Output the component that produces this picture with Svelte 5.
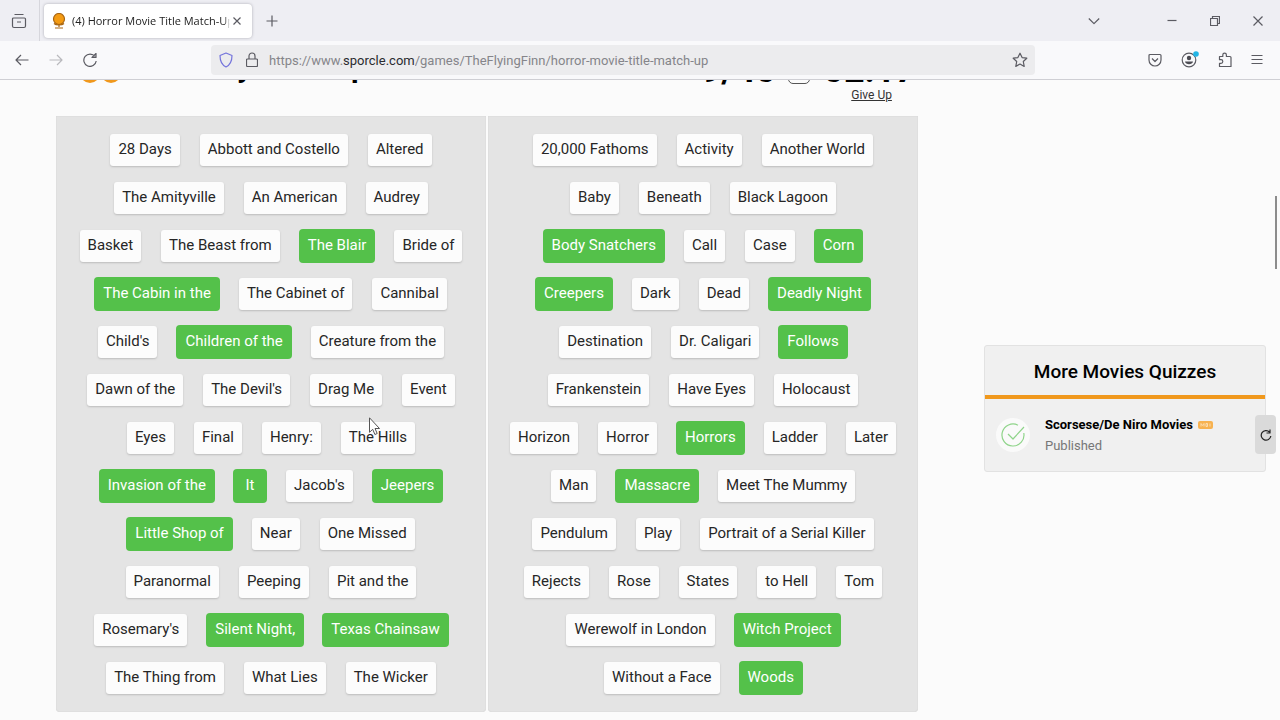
<script lang="ts">
	interface Answer {
		text: string;
		found?: boolean;
	}

	// a leading + marks an answer that is already matched
	function parse(list: string): Answer[] {
		return list.split('|').map((item) => ({
			text: item.replace('+', ''),
			found: item.startsWith('+')
		}));
	}

	const columns = [
		parse(
			"28 Days|Abbott and Costello|Altered|The Amityville|An American|Audrey|Basket|The Beast from|+The Blair|Bride of|+The Cabin in the|The Cabinet of|Cannibal|Child's|+Children of the|Creature from the|Dawn of the|The Devil's|Drag Me|Event|Eyes|Final|Henry:|The Hills|+Invasion of the|+It|Jacob's|+Jeepers|+Little Shop of|Near|One Missed|Paranormal|Peeping|Pit and the|Rosemary's|+Silent Night,|+Texas Chainsaw|The Thing from|What Lies|The Wicker"
		),
		parse(
			'20,000 Fathoms|Activity|Another World|Baby|Beneath|Black Lagoon|+Body Snatchers|Call|Case|+Corn|+Creepers|Dark|Dead|+Deadly Night|Destination|Dr. Caligari|+Follows|Frankenstein|Have Eyes|Holocaust|Horizon|Horror|+Horrors|Ladder|Later|Man|+Massacre|Meet The Mummy|Pendulum|Play|Portrait of a Serial Killer|Rejects|Rose|States|to Hell|Tom|Werewolf in London|+Witch Project|Without a Face|+Woods'
		)
	];

	let url = $state('/games/TheFlyingFinn/horror-movie-title-match-up');
</script>

<div class="browser">
	<div class="tabbar">
		<button class="icon view" aria-label="View">
			<svg width="16" height="16" viewBox="0 0 16 16">
				<path d="M3.5 1.5h9M2.5 5h11a1 1 0 0 1 1 1v7a1.5 1.5 0 0 1-1.500 1.500H3A1.500 1.500 0 0 1 1.500 13V6a1 1 0 0 1 1-1zM6 9h4" />
			</svg>
		</button>
		<div class="tab">
			<svg class="globe" width="14" height="16" viewBox="0 0 14 16">
				<path d="M3 15h8M7 11v3M2 10.500c2 2 8 2 10 0" />
				<circle cx="7" cy="6" r="5.500" />
			</svg>
			<span class="tab-title">(4) Horror Movie Title Match-Up</span>
			<button class="icon" aria-label="Close tab">
				<svg width="10" height="10" viewBox="0 0 10 10"><path d="M1.500 1.500l7 7M8.500 1.500l-7 7" /></svg>
			</button>
		</div>
		<button class="icon plus" aria-label="New tab">
			<svg width="12" height="12" viewBox="0 0 12 12"><path d="M6 .5v11M.5 6h11" /></svg>
		</button>
		<div class="window">
			<button class="icon" aria-label="List all tabs">
				<svg width="12" height="12" viewBox="0 0 12 12"><path d="M.8 3.500L6 8.700l5.200-5.200" /></svg>
			</button>
			<button class="icon" aria-label="Minimize">
				<svg width="10" height="10" viewBox="0 0 10 10"><path d="M.5 4.500h9" /></svg>
			</button>
			<button class="icon" aria-label="Restore">
				<svg width="10" height="10" viewBox="0 0 10 10"><path d="M.5 2.500h7v7h-7zM2.500 2.500v-2h7v7h-2" /></svg>
			</button>
			<button class="icon" aria-label="Close">
				<svg width="10" height="10" viewBox="0 0 10 10"><path d="M.5.5l9 9M9.500.5l-9 9" /></svg>
			</button>
		</div>
	</div>

	<div class="toolbar">
		<div class="nav">
			<button class="icon" aria-label="Back">
				<svg width="14" height="14" viewBox="0 0 14 14"><path d="M13.500 7H1M6 2L1 7l5 5" /></svg>
			</button>
			<button class="icon" aria-label="Forward" disabled>
				<svg width="14" height="14" viewBox="0 0 14 14"><path d="M.5 7H13M8 2l5 5-5 5" /></svg>
			</button>
			<button class="icon" aria-label="Reload">
				<svg width="14" height="14" viewBox="0 0 14 14">
					<path d="M12 3.500A6.200 6.200 0 1 0 13.200 8M13 .5v4H9z" />
				</svg>
			</button>
		</div>
		<label class="urlbar">
			<svg class="shield" width="14" height="16" viewBox="0 0 14 16">
				<path d="M7 1l6 2.500c0 5-1 9-6 11.500-5-2.500-6-6.500-6-11.500z" />
			</svg>
			<svg width="12" height="16" viewBox="0 0 12 16">
				<path d="M3 7V4a3 3 0 0 1 6 0v3M1.500 7h9a1 1 0 0 1 1 1v5.500a1 1 0 0 1-1 1h-9a1 1 0 0 1-1-1V8a1 1 0 0 1 1-1z" />
			</svg>
			<span class="host">https://www.<b>sporcle.com</b></span>
			<input aria-label="Address" bind:value={url} />
			<svg width="16" height="16" viewBox="0 0 16 16">
				<path d="M8 1.200l2.100 4.400 4.700.6-3.500 3.300.9 4.900L8 12l-4.200 2.400.9-4.900L1.200 6.200l4.700-.6z" />
			</svg>
		</label>
		<div class="tools">
			<button class="icon" aria-label="Save to Pocket">
				<svg width="14" height="14" viewBox="0 0 14 14">
					<path d="M2 1.500h10a1 1 0 0 1 1 1V7A6 6 0 0 1 1 7V2.500a1 1 0 0 1 1-1zM4 5.500l3 3 3-3" />
				</svg>
			</button>
			<button class="icon" aria-label="Account">
				<svg width="18" height="18" viewBox="0 0 18 18">
					<circle cx="8" cy="9" r="6.800" />
					<circle class="solid" cx="8" cy="7" r="2.200" />
					<path class="solid" d="M4 10.500h8c-.5 3.500-7.500 3.500-8 0z" />
					<circle class="dot" cx="15" cy="3" r="2.800" />
				</svg>
			</button>
			<button class="icon" aria-label="Extensions">
				<svg width="14" height="16" viewBox="0 0 14 16">
					<path d="M1.500 4.500h3.300V3a1.800 1.800 0 0 1 3.600 0v1.500h3.600a1 1 0 0 1 1 1v9H1.500v-3.200H3a1.800 1.800 0 0 0 0-3.600H1.500z" />
				</svg>
			</button>
			<button class="icon" aria-label="Menu">
				<svg width="12" height="12" viewBox="0 0 12 12"><path d="M.5 1.500h11M.5 5.500h11M.5 9.500h11" /></svg>
			</button>
		</div>
	</div>

	<main>
		<section class="game">
			<header>
				<div class="status">
					<svg width="40" height="20" viewBox="0 0 40 20">
						<circle cx="10" cy="9" r="10" />
						<circle cx="31" cy="9" r="10" />
					</svg>
					<span class="first">y</span>
					<span>p</span>
				</div>
				<div class="score">9/40</div>
				<div class="timer">
					<div class="clock"><span class="pause"></span>02:17</div>
					<a href="#give-up">Give Up</a>
				</div>
			</header>
			<div class="board">
				{#each columns as answers}
					<div class="column">
						{#each answers as answer}
							<button class="answer" class:found={answer.found}>{answer.text}</button>
						{/each}
					</div>
				{/each}
			</div>
		</section>

		<aside>
			<h2>More Movies Quizzes</h2>
			<div class="quiz">
				<svg class="check" width="34" height="34" viewBox="0 0 34 34">
					<circle class="disc" cx="17" cy="17" r="17" />
					<path d="M22 7.200A11 11 0 1 0 27.800 15M12 16l5 5L28 9" />
				</svg>
				<div>
					<a href="#quiz">
						Scorsese/De Niro Movies
						<svg class="badge" width="15" height="8" viewBox="0 0 15 8">
							<rect width="15" height="8" rx="2" />
							<path d="M3 5.500v-3l1.500 2 1.500-2v3M8 2.500h1.500v3H8zM12 2.500v3" />
						</svg>
					</a>
					<p>Published</p>
				</div>
			</div>
		</aside>
	</main>

	<button class="icon refresh" aria-label="Refresh">
		<svg width="12" height="12" viewBox="0 0 12 12"><path d="M9.500 3A4.800 4.800 0 1 0 10.800 7M10 .5V4H6.500" /></svg>
	</button>
	<div class="scroll"></div>
	<svg class="cursor" width="12" height="19" viewBox="0 0 12 19">
		<path d="M.5.8v14.500l3.200-3 2.200 5.200 2.300-1-2.200-5h4.500z" />
	</svg>
</div>

<style>
	:global(body) {
		margin: 0;
		background: #fbfbfb;
	}

	.browser {
		position: relative;
		height: 100vh;
		overflow: hidden;
		display: flex;
		flex-direction: column;
		font-family: Roboto, sans-serif;
		color: #222;
	}

	button {
		border: none;
		padding: 0;
		font: inherit;
	}

	svg {
		flex: none;
		fill: none;
		stroke: #5b5b62;
		stroke-width: 1.2;
		stroke-linejoin: round;
	}

	.icon {
		display: flex;
		align-items: center;
		justify-content: center;
		background: none;
	}

	.tabbar {
		flex: none;
		height: 41px;
		display: flex;
		align-items: center;
		background: #eeeef3;
		font-family: 'Open Sans', sans-serif;
	}

	.view {
		width: 40px;
		height: 41px;
		padding-right: 2px;
		box-sizing: border-box;
		border-right: 1px solid #d6d6dc;
	}

	.tab {
		display: flex;
		align-items: center;
		gap: 2px;
		width: 208px;
		height: 34px;
		margin-left: 4px;
		padding: 0 10px 0 8px;
		box-sizing: border-box;
		border-radius: 4px;
		background: #fff;
		box-shadow: 0 0 3px #aaaab2;
	}

	.globe {
		margin-right: 4px;
		fill: #f49b12;
		stroke: #a86512;
	}

	.tab-title {
		flex: 1;
		overflow: hidden;
		white-space: nowrap;
		font-size: 11px;
		mask-image: linear-gradient(to left, transparent, #000 6px);
	}

	.plus {
		margin-left: 14px;
	}

	.window {
		display: flex;
		align-items: center;
		gap: 33px;
		margin-left: auto;
		padding-right: 17px;
	}

	.window .icon:first-child {
		margin-right: 34px;
	}

	.toolbar {
		flex: none;
		display: flex;
		align-items: center;
		height: 39px;
		box-sizing: border-box;
		border-bottom: 1px solid #cfcfd4;
		background: #f9f9fb;
	}

	.nav {
		display: flex;
		gap: 20px;
		width: 211px;
		padding-left: 15px;
		box-sizing: border-box;
	}

	.nav .icon:disabled {
		opacity: 0.4;
	}

	.urlbar {
		flex: 1;
		display: flex;
		align-items: center;
		height: 30px;
		padding: 0 7px 0 8px;
		border-radius: 4px;
		background: #ececee;
		color: #85858a;
		font-size: 13px;
	}

	.shield {
		margin-right: 13px;
		stroke: #7474dc;
	}

	.host {
		margin-left: 11px;
	}

	.host b {
		font-weight: 400;
		color: #2b2b30;
	}

	.urlbar input {
		flex: 1;
		min-width: 0;
		padding: 0;
		border: none;
		outline: none;
		background: none;
		color: inherit;
		font: inherit;
	}

	.tools {
		display: flex;
		align-items: center;
		justify-content: flex-end;
		gap: 19px;
		width: 245px;
		padding-right: 17px;
		box-sizing: border-box;
	}

	.solid {
		fill: #4b4b52;
		stroke: none;
	}

	.dot {
		fill: #22b5e5;
		stroke: none;
	}

	main {
		flex: 1;
		min-height: 0;
		overflow: hidden;
		display: grid;
		grid-template-columns: 1fr 282px;
		gap: 66px;
		padding: 0 14px 0 56px;
	}

	/* scrolled so only the foot of the score line is left */
	header {
		display: flex;
		align-items: flex-start;
		height: 76px;
		margin-top: -40px;
		font-size: 36px;
		font-weight: 700;
		line-height: 42px;
		color: #000;
	}

	.status {
		flex: 1;
		display: flex;
		padding: 10px 0 0 24px;
		line-height: 34px;
		font-size: 30px;
	}

	.status svg {
		margin-top: 14px;
		fill: #f0981c;
		stroke: none;
	}

	.status .first {
		margin: 0 99px 0 117px;
	}

	.score {
		margin-right: 12px;
		padding-top: 9px;
	}

	.timer {
		padding: 9px 2px 0 0;
	}

	.clock {
		display: flex;
		align-items: flex-start;
		height: 38px;
	}

	.pause {
		width: 22px;
		height: 22px;
		margin: 13px 13px 0 0;
		box-sizing: border-box;
		border: 1px solid #555;
		border-radius: 5px;
	}

	.timer a {
		display: block;
		padding-left: 63px;
		color: #333;
		font-size: 12px;
		font-weight: 400;
		line-height: 16px;
	}

	.board {
		display: grid;
		grid-template-columns: 1fr 1fr;
		gap: 2px;
	}

	.column {
		display: flex;
		flex-wrap: wrap;
		justify-content: center;
		align-content: flex-start;
		gap: 16px 20px;
		padding: 18px 20px;
		border-radius: 0 0 4px 4px;
		background: #e4e4e4;
		box-shadow: inset 0 0 1px #bbb;
	}

	.answer {
		min-width: 32px;
		height: 32px;
		padding: 0 8px 1px;
		border-radius: 3px;
		background: #fcfcfc;
		box-shadow: 0 1px 2px #bbb;
		color: #262626;
		font-size: 15px;
		line-height: 31px;
	}

	.found {
		background: #54c14a;
		box-shadow: 0 0 0 1px #54c14a;
		color: #fff;
	}

	aside {
		align-self: start;
		margin-top: 265px;
		border: 1px solid #e2e2e2;
		border-radius: 3px;
		box-sizing: border-box;
		background: #f0f0f0;
	}

	h2 {
		margin: 0;
		padding: 14px 0 11px;
		border-bottom: 4px solid #f0981c;
		color: #000;
		font-size: 19px;
		font-weight: 500;
		line-height: 24px;
		text-align: center;
	}

	.quiz {
		display: flex;
		align-items: center;
		gap: 15px;
		padding: 15px 11px;
	}

	.quiz a {
		color: #000;
		font-size: 13px;
		font-weight: 700;
		line-height: 21px;
		text-decoration: none;
	}

	.quiz p {
		margin: 0;
		color: #777;
		font-size: 13px;
		line-height: 21px;
	}

	.check {
		stroke: #8fd48a;
	}

	.disc {
		fill: #fafafa;
		stroke: none;
	}

	.badge {
		margin-left: 2px;
		fill: #f7b250;
		stroke: #fbdcae;
		stroke-width: 1;
	}

	.badge rect {
		stroke: none;
	}

	.refresh {
		position: absolute;
		top: 415px;
		right: 4px;
		width: 21px;
		height: 39px;
		border-radius: 4px;
		background: #dadada;
	}

	.refresh svg {
		stroke: #222;
	}

	.scroll {
		position: absolute;
		top: 196px;
		right: 3px;
		width: 2px;
		height: 73px;
		background: #8c8c8c;
	}

	.cursor {
		position: absolute;
		top: 417px;
		left: 369px;
		fill: #fff;
		stroke: #555;
		stroke-width: 1;
	}
</style>
